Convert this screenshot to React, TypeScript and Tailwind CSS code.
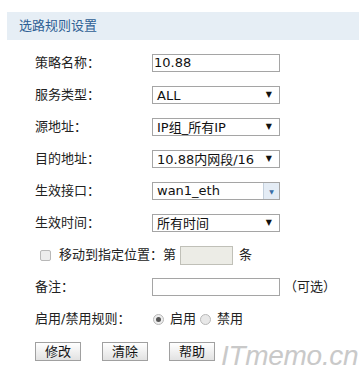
const font = "font-['Tahoma','DejaVu_Sans','Noto_Sans_CJK_SC',sans-serif]";

function Label({ children }: { children: React.ReactNode }) {
  return <div className="w-[152px] shrink-0 whitespace-nowrap pl-[35px] text-[13px] text-[#222]">{children}</div>;
}

function Select({ value }: { value: string }) {
  return (
    <div className="flex h-[18px] w-[128px] items-center justify-between border border-[#a5a5a5] bg-white pl-[4px] pr-[7px] text-[13px] leading-none text-[#111]">
      <span>{value}</span>
      <span className="text-[8px] text-[#111]">▼</span>
    </div>
  );
}

function Row({ children, className = "" }: { children: React.ReactNode; className?: string }) {
  return <div className={`flex h-[32px] items-center whitespace-nowrap ${className}`}>{children}</div>;
}

export default function App() {
  return (
    <div className={`relative h-[373px] w-[359px] overflow-hidden bg-white pt-[12px] ${font}`}>
      {/* HEADER */}
      <div className="ml-[7px] flex h-[28px] items-center bg-[#e6eef5] pl-[12px] text-[13px] text-[#2f5f94]">
        选路规则设置
      </div>

      <div className="mt-[7px]">
        <Row>
          <Label>策略名称：</Label>
          <div className="flex h-[18px] w-[128px] items-center border border-[#a5a5a5] pl-[1px] text-[13px] text-[#111]">
            10.88
          </div>
        </Row>
        <Row>
          <Label>服务类型：</Label>
          <Select value="ALL" />
        </Row>
        <Row>
          <Label>源地址：</Label>
          <Select value="IP组_所有IP" />
        </Row>
        <Row>
          <Label>目的地址：</Label>
          <Select value="10.88内网段/16" />
        </Row>
        <Row>
          <Label>生效接口：</Label>
          <div className="flex h-[18px] w-[128px] items-center border border-[#a5a5a5] bg-white text-[13px] text-[#111]">
            <span className="flex-1 pl-[4px]">wan1_eth</span>
            <span className="flex h-full w-[16px] items-center justify-center border-l border-[#c4d0dc] bg-[#e4ecf5] text-[6px] text-[#3a6ea5]">
              ▼
            </span>
          </div>
        </Row>
        <Row>
          <Label>生效时间：</Label>
          <Select value="所有时间" />
        </Row>
        <Row>
          <div className="flex w-[163px] shrink-0 items-center pl-[40px] text-[13px] text-[#222]">
            <span className="mr-[8px] h-[11px] w-[11px] rounded-[2px] border border-[#b8b8b8] bg-[#ececec]" />
            移动到指定位置：
          </div>
          <span className="text-[13px] text-[#222]">第</span>
          <span className="ml-[4px] h-[19px] w-[53px] border border-[#c0c0b8] bg-[#ececE6]" />
          <span className="ml-[6px] text-[13px] text-[#222]">条</span>
        </Row>
        <Row>
          <Label>备注：</Label>
          <span className="h-[18px] w-[128px] border border-[#a5a5a5] bg-white" />
          <span className="ml-[4px] text-[13px] text-[#222]">（可选）</span>
        </Row>
        <Row>
          <Label>启用/禁用规则：</Label>
          <span className="ml-[1px] flex h-[11px] w-[11px] items-center justify-center rounded-full border border-[#b8b8b8] bg-[#eee]">
            <span className="h-[5px] w-[5px] rounded-full bg-[#555]" />
          </span>
          <span className="ml-[6px] text-[13px] text-[#222]">启用</span>
          <span className="ml-[4px] h-[11px] w-[11px] rounded-full border border-[#b8b8b8] bg-[#e8e8e8]" />
          <span className="ml-[6px] text-[13px] text-[#222]">禁用</span>
        </Row>

        {/* BUTTONS */}
        <div className="mt-[6px] flex h-[20px] items-center pl-[35px]">
          {["修改", "清除", "帮助"].map((t) => (
            <button
              key={t}
              className="mr-[21px] h-[19px] w-[46px] border border-[#a0a0a0] bg-gradient-to-b from-white to-[#e2e2e2] text-[13px] leading-none text-[#111]"
            >
              {t}
            </button>
          ))}
        </div>
      </div>

      {/* WATERMARK */}
      <div className="absolute left-[221px] top-[342px] font-['Liberation_Sans',sans-serif] text-[28px] italic leading-none tracking-[-0.3px] text-[#c9c9c9]">
        ITmemo.cn
      </div>
    </div>
  );
}
